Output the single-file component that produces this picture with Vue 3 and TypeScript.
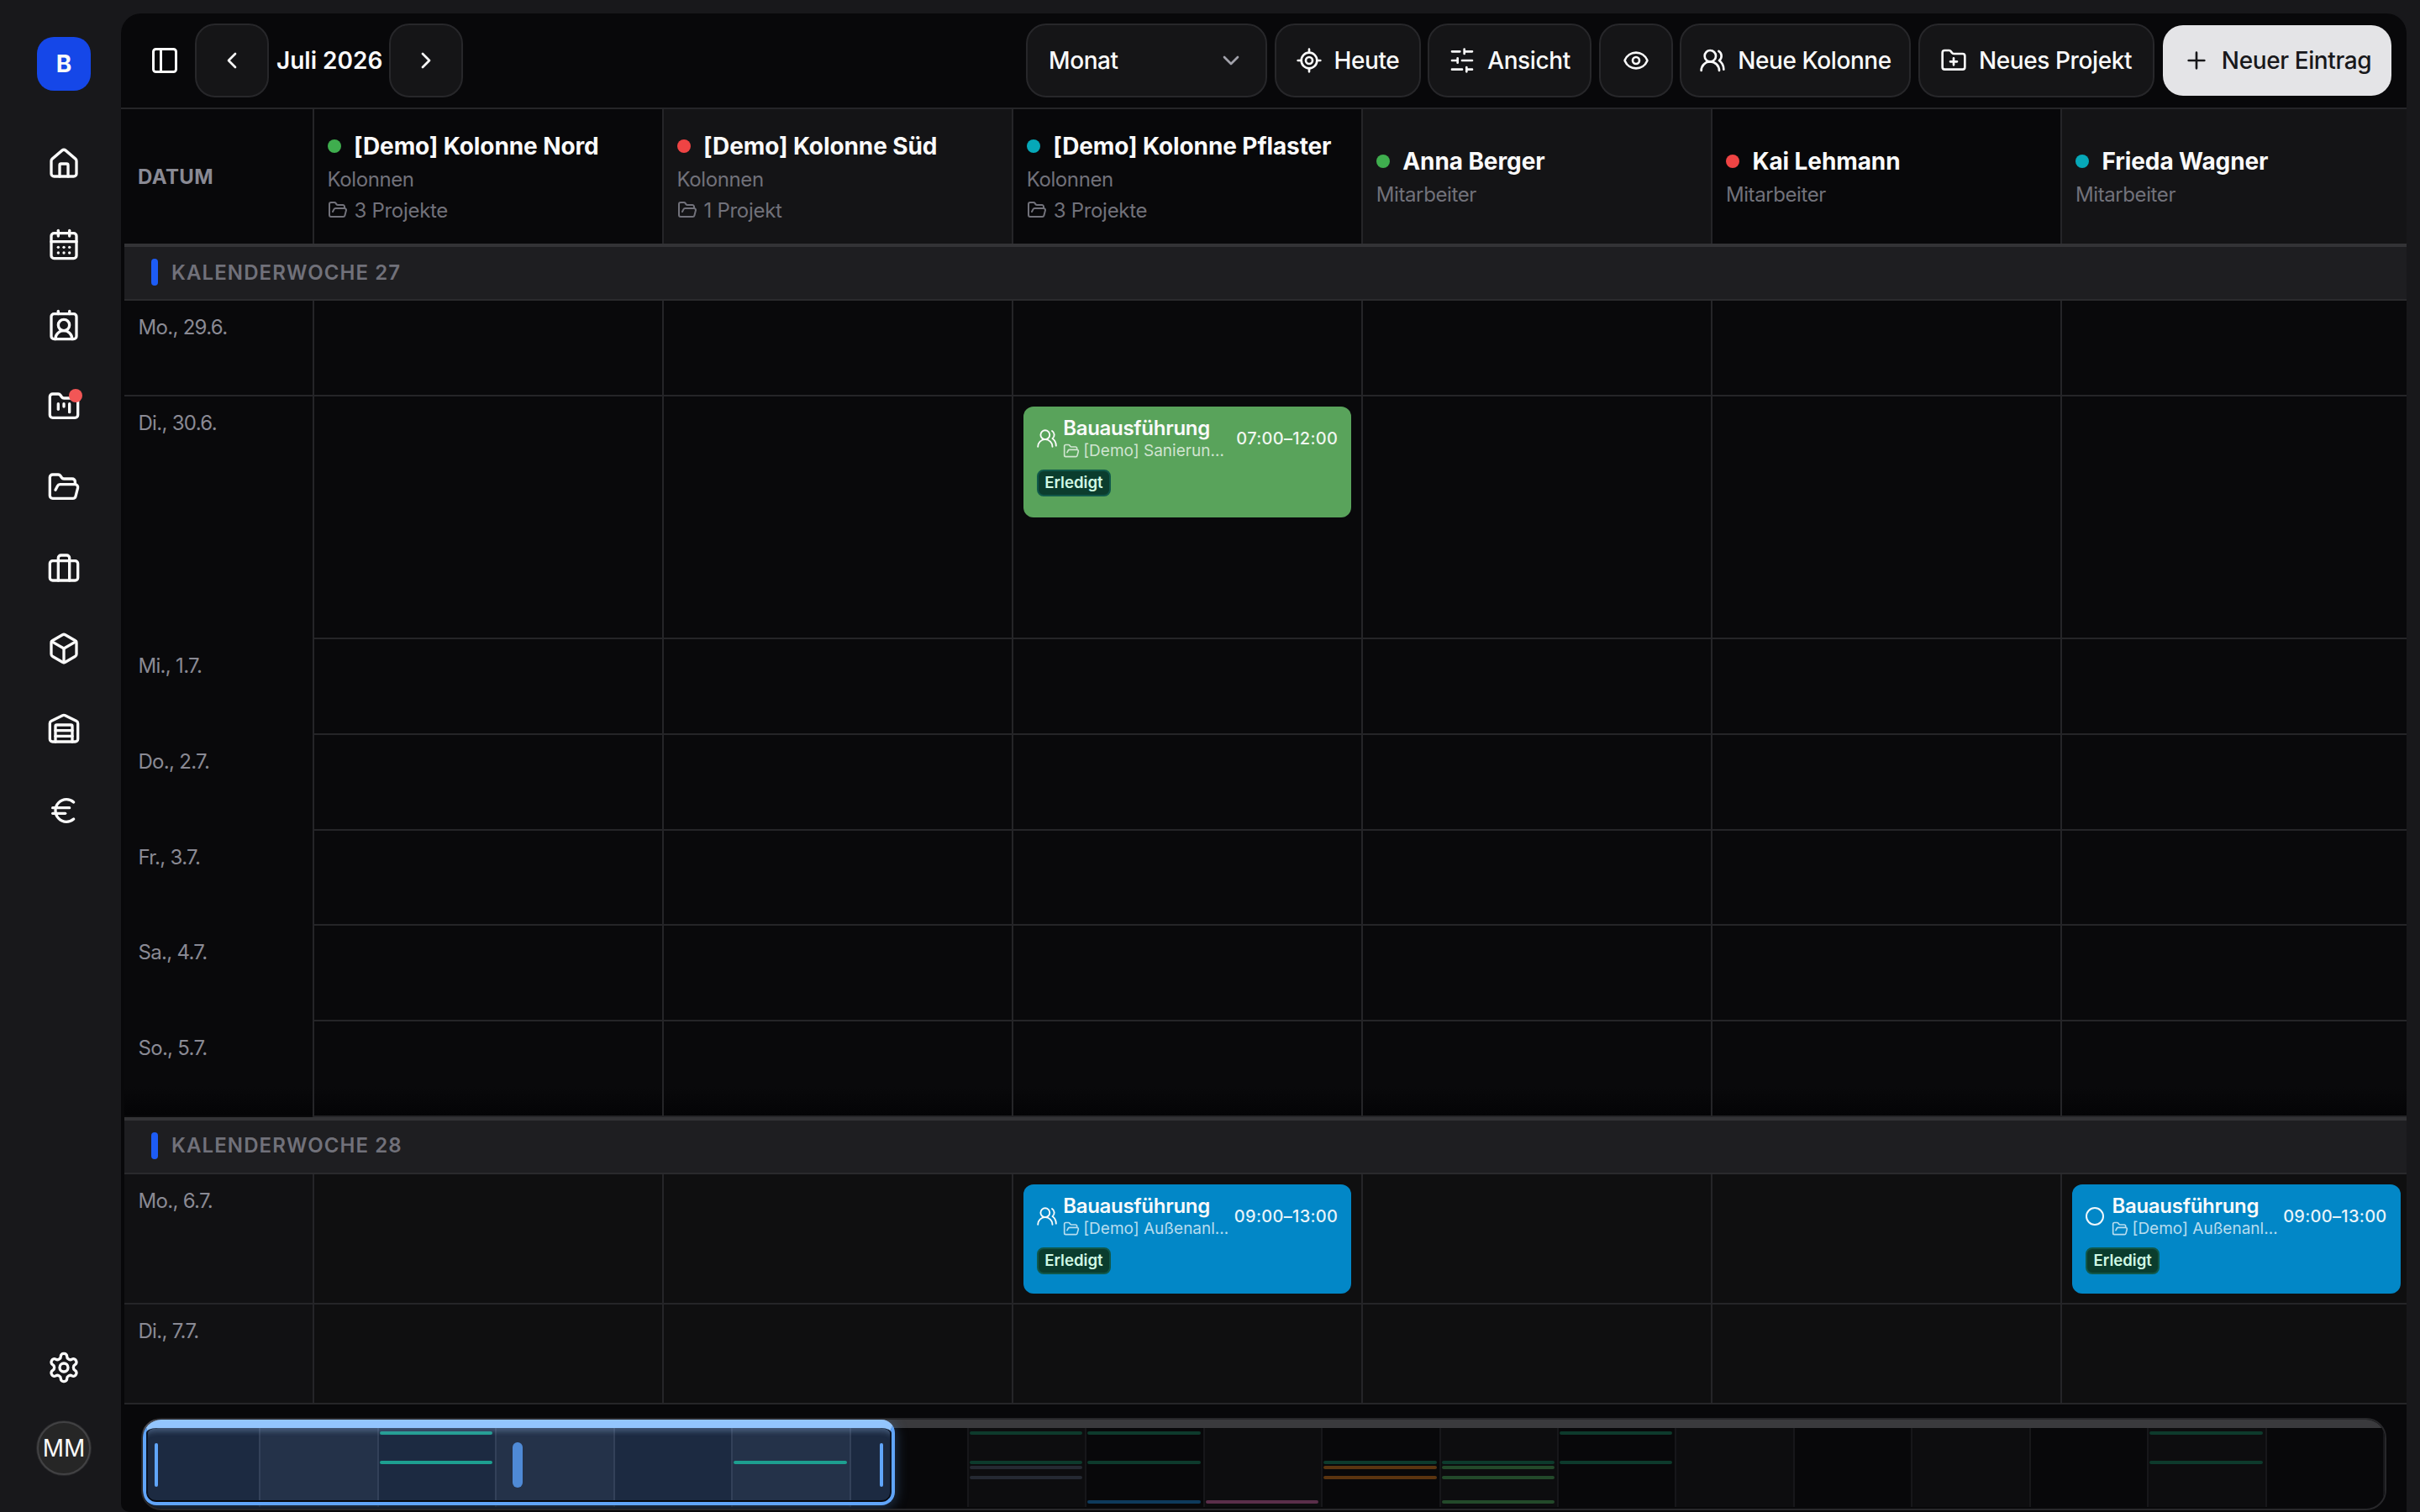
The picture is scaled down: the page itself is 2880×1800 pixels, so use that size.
<script setup lang="ts">
interface Col { name: string; dot: string; sub: string; projects?: string }
const columns: Col[] = [
  { name: '[Demo] Kolonne Nord', dot: '#3fae4e', sub: 'Kolonnen', projects: '3 Projekte' },
  { name: '[Demo] Kolonne Süd', dot: '#ef4444', sub: 'Kolonnen', projects: '1 Projekt' },
  { name: '[Demo] Kolonne Pflaster', dot: '#06a8b8', sub: 'Kolonnen', projects: '3 Projekte' },
  { name: 'Anna Berger', dot: '#3fae4e', sub: 'Mitarbeiter' },
  { name: 'Kai Lehmann', dot: '#ef4444', sub: 'Mitarbeiter' },
  { name: 'Frieda Wagner', dot: '#06a8b8', sub: 'Mitarbeiter' },
]
interface Entry { col: number; color: string; project: string; time: string; icon: 'users' | 'circle'; tall?: boolean }
interface Row { kw?: string; label?: string; h: number; entries?: Entry[]; open?: boolean; late?: boolean; dim?: boolean }
const rows: Row[] = [
  { kw: 'KALENDERWOCHE 27', h: 68 },
  { label: 'Mo., 29.6.', h: 114 },
  { label: 'Di., 30.6.', h: 289, open: true, entries: [{ col: 2, color: '#59a35b', project: '[Demo] Sanierun…', time: '07:00–12:00', icon: 'users', tall: true }] },
  { label: 'Mi., 1.7.', h: 113.8, open: true },
  { label: 'Do., 2.7.', h: 113.8, open: true },
  { label: 'Fr., 3.7.', h: 113.8, open: true },
  { label: 'Sa., 4.7.', h: 113.8, open: true },
  { label: 'So., 5.7.', h: 113.8, open: true, dim: true },
  { kw: 'KALENDERWOCHE 28', h: 68 },
  { label: 'Mo., 6.7.', h: 155, late: true, entries: [
    { col: 2, color: '#0287c7', project: '[Demo] Außenanl…', time: '09:00–13:00', icon: 'users' },
    { col: 5, color: '#0287c7', project: '[Demo] Außenanl…', time: '09:00–13:00', icon: 'circle' },
  ] },
  { label: 'Di., 7.7.', h: 119, late: true },
]
const entryAt = (r: Row, c: number) => r.entries?.find(e => e.col === c)

const navIcons = [
  ['M15 21v-8a1 1 0 0 0-1-1h-4a1 1 0 0 0-1 1v8', 'M3 10a2 2 0 0 1 .709-1.528l7-5.999a2 2 0 0 1 2.582 0l7 5.999A2 2 0 0 1 21 10v9a2 2 0 0 1-2 2H5a2 2 0 0 1-2-2z'],
  ['M8 2v4', 'M16 2v4', 'M5 4h14a2 2 0 0 1 2 2v14a2 2 0 0 1-2 2H5a2 2 0 0 1-2-2V6a2 2 0 0 1 2-2z', 'M3 10h18', 'M8 14h.01', 'M12 14h.01', 'M16 14h.01', 'M8 18h.01', 'M12 18h.01', 'M16 18h.01'],
  ['M16 2v2', 'M17.915 22a6 6 0 0 0-12 0', 'M8 2v2', 'M12 8a4 4 0 1 1 0 8a4 4 0 1 1 0-8z', 'M5 4h14a2 2 0 0 1 2 2v14a2 2 0 0 1-2 2H5a2 2 0 0 1-2-2V6a2 2 0 0 1 2-2z'],
  ['M4 20h16a2 2 0 0 0 2-2V8a2 2 0 0 0-2-2h-7.93a2 2 0 0 1-1.66-.9l-.82-1.2A2 2 0 0 0 7.93 3H4a2 2 0 0 0-2 2v13c0 1.1.9 2 2 2Z', 'M8 10v4', 'M12 10v2', 'M16 10v6'],
  ['m6 14 1.5-2.9A2 2 0 0 1 9.24 10H20a2 2 0 0 1 1.94 2.5l-1.54 6a2 2 0 0 1-1.95 1.5H4a2 2 0 0 1-2-2V5a2 2 0 0 1 2-2h3.9a2 2 0 0 1 1.69.9l.81 1.2a2 2 0 0 0 1.67.9H18a2 2 0 0 1 2 2v2'],
  ['M16 21V5a2 2 0 0 0-2-2h-4a2 2 0 0 0-2 2v16', 'M4 7h16a2 2 0 0 1 2 2v10a2 2 0 0 1-2 2H4a2 2 0 0 1-2-2V9a2 2 0 0 1 2-2z'],
  ['M21 8a2 2 0 0 0-1-1.73l-7-4a2 2 0 0 0-2 0l-7 4A2 2 0 0 0 3 8v8a2 2 0 0 0 1 1.73l7 4a2 2 0 0 0 2 0l7-4A2 2 0 0 0 21 16Z', 'm3.3 7 8.7 5 8.7-5', 'M12 22V12'],
  ['M18 21V10a1 1 0 0 0-1-1H7a1 1 0 0 0-1 1v11', 'M22 19a2 2 0 0 1-2 2H4a2 2 0 0 1-2-2V8a2 2 0 0 1 1.132-1.803l7.95-3.974a2 2 0 0 1 1.837 0l7.948 3.974A2 2 0 0 1 22 8z', 'M6 13h12', 'M6 17h12'],
  ['M4 10h12', 'M4 14h9', 'M19 6a7.7 7.7 0 0 0-5.2-2A7.9 7.9 0 0 0 6 12c0 4.4 3.5 8 7.8 8 2 0 3.8-.8 5.2-2'],
]
const folder = 'm6 14 1.5-2.9A2 2 0 0 1 9.24 10H20a2 2 0 0 1 1.94 2.5l-1.54 6a2 2 0 0 1-1.95 1.5H4a2 2 0 0 1-2-2V5a2 2 0 0 1 2-2h3.9a2 2 0 0 1 1.69.9l.81 1.2a2 2 0 0 0 1.67.9H18a2 2 0 0 1 2 2v2'
const gear = 'M12.22 2h-.44a2 2 0 0 0-2 2v.18a2 2 0 0 1-1 1.73l-.43.25a2 2 0 0 1-2 0l-.15-.08a2 2 0 0 0-2.73.73l-.22.38a2 2 0 0 0 .73 2.73l.15.1a2 2 0 0 1 1 1.72v.51a2 2 0 0 1-1 1.74l-.15.09a2 2 0 0 0-.73 2.73l.22.38a2 2 0 0 0 2.73.73l.15-.08a2 2 0 0 1 2 0l.43.25a2 2 0 0 1 1 1.73V20a2 2 0 0 0 2 2h.44a2 2 0 0 0 2-2v-.18a2 2 0 0 1 1-1.73l.43-.25a2 2 0 0 1 2 0l.15.08a2 2 0 0 0 2.73-.73l.22-.39a2 2 0 0 0-.73-2.73l-.15-.08a2 2 0 0 1-1-1.74v-.5a2 2 0 0 1 1-1.74l.15-.09a2 2 0 0 0 .73-2.73l-.22-.38a2 2 0 0 0-2.73-.73l-.15.08a2 2 0 0 1-2 0l-.43-.25a2 2 0 0 1-1-1.73V4a2 2 0 0 0-2-2z'

const G = '#0d3a2c', GR = '#252932', B = '#0e3a5c', P = '#5a2e4a', O = '#5a3410', L = '#23492a', T = '#09553e'
const tops = [4, 39, 45, 57, 86]
const mini: [number, number, string][] = [
  [2, 0, T], [2, 1, T], [5, 1, T], [5, 4, T],
  [7, 0, G], [7, 1, G], [7, 2, GR], [7, 3, GR],
  [8, 0, G], [8, 1, G], [8, 4, B],
  [9, 4, P],
  [10, 1, G], [10, 2, O], [10, 3, O],
  [11, 1, G], [11, 2, L], [11, 3, L], [11, 4, L],
  [12, 0, G], [12, 1, G],
  [17, 0, G], [17, 1, G],
]
const days = Array.from({ length: 19 }, (_, i) => i)
const barsIn = (d: number) => mini.filter(m => m[0] === d)
</script>

<template>
  <div class="app">
    <aside class="side">
      <div class="logo">B</div>
      <nav class="nav">
        <div v-for="(icon, i) in navIcons" :key="i" class="nav-item">
          <svg class="ic40" viewBox="0 0 24 24"><path v-for="d in icon" :key="d" :d="d" /></svg>
          <span v-if="i === 3" class="notif"></span>
        </div>
      </nav>
      <div class="side-bottom">
        <svg class="ic40" viewBox="0 0 24 24"><path :d="gear" /><circle cx="12" cy="12" r="3" /></svg>
        <div class="avatar">MM</div>
      </div>
    </aside>

    <main class="main">
      <header class="toolbar">
        <div class="tb-left">
          <svg class="ic36 toggle" viewBox="0 0 24 24"><rect x="3" y="3" width="18" height="18" rx="2" /><path d="M9 3v18" /></svg>
          <button class="btn square"><svg class="ic32" viewBox="0 0 24 24"><path d="m15 18-6-6 6-6" /></svg></button>
          <span class="month">Juli 2026</span>
          <button class="btn square"><svg class="ic32" viewBox="0 0 24 24"><path d="m9 18 6-6-6-6" /></svg></button>
        </div>
        <div class="tb-right">
          <button class="btn select"><span>Monat</span><svg class="ic32 muted" viewBox="0 0 24 24"><path d="m6 9 6 6 6-6" /></svg></button>
          <button class="btn heute">
            <svg class="ic32" viewBox="0 0 24 24"><path d="M2 12h3M19 12h3M12 2v3M12 19v3" /><circle cx="12" cy="12" r="7" /><circle cx="12" cy="12" r="3" /></svg>Heute
          </button>
          <button class="btn ansicht">
            <svg class="ic32" viewBox="0 0 24 24"><path d="M21 4h-7M10 4H3M21 12h-9M8 12H3M21 20h-5M12 20H3M14 2v4M8 10v4M16 18v4" /></svg>Ansicht
          </button>
          <button class="btn square"><svg class="ic32" viewBox="0 0 24 24"><path d="M2.062 12.348a1 1 0 0 1 0-.696 10.75 10.75 0 0 1 19.876 0 1 1 0 0 1 0 .696 10.75 10.75 0 0 1-19.876 0" /><circle cx="12" cy="12" r="3" /></svg></button>
          <button class="btn kolonne">
            <svg class="ic32" viewBox="0 0 24 24"><path d="M18 21a8 8 0 0 0-16 0" /><circle cx="10" cy="8" r="5" /><path d="M22 20c0-3.37-2-6.5-4-8a5 5 0 0 0-.45-8.3" /></svg>Neue Kolonne
          </button>
          <button class="btn projekt">
            <svg class="ic32" viewBox="0 0 24 24"><path d="M12 10v6M9 13h6M20 20a2 2 0 0 0 2-2V8a2 2 0 0 0-2-2h-7.9a2 2 0 0 1-1.69-.9L9.6 3.9A2 2 0 0 0 7.93 3H4a2 2 0 0 0-2 2v13a2 2 0 0 0 2 2Z" /></svg>Neues Projekt
          </button>
          <button class="btn primary">
            <svg class="ic32" viewBox="0 0 24 24"><path d="M5 12h14M12 5v14" /></svg>Neuer Eintrag
          </button>
        </div>
      </header>

      <div class="head">
        <div class="datum">DATUM</div>
        <div v-for="(c, i) in columns" :key="c.name" class="hcol" :class="{ alt: i % 2 === 1 }">
          <div class="hname"><span class="dot" :style="{ background: c.dot }"></span>{{ c.name }}</div>
          <div class="hsub">{{ c.sub }}</div>
          <div v-if="c.projects" class="hproj">
            <svg class="ic24" viewBox="0 0 24 24"><path :d="folder" /></svg>{{ c.projects }}
          </div>
        </div>
      </div>

      <div class="body">
        <template v-for="(r, ri) in rows" :key="ri">
          <div v-if="r.kw" class="kw" :style="{ height: r.h + 'px' }">
            <span class="kw-bar"></span>{{ r.kw }}
          </div>
          <div v-else class="row" :class="{ late: r.late, dim: r.dim }" :style="{ height: r.h + 'px' }">
            <div class="date" :class="{ open: r.open }">{{ r.label }}</div>
            <div v-for="(c, ci) in columns" :key="c.name" class="cell">
              <div v-if="entryAt(r, ci)" class="card" :class="{ tall: entryAt(r, ci)!.tall }" :style="{ background: entryAt(r, ci)!.color }">
                <div class="card-top">
                  <svg v-if="entryAt(r, ci)!.icon === 'users'" class="card-ic" viewBox="0 0 24 24"><path d="M18 21a8 8 0 0 0-16 0" /><circle cx="10" cy="8" r="5" /><path d="M22 20c0-3.37-2-6.5-4-8a5 5 0 0 0-.45-8.3" /></svg>
                  <span v-else class="card-circle"></span>
                  <div class="card-text">
                    <div class="card-title">Bauausführung</div>
                    <div class="card-sub"><svg class="ic20" viewBox="0 0 24 24"><path :d="folder" /></svg>{{ entryAt(r, ci)!.project }}</div>
                  </div>
                  <div class="card-time">{{ entryAt(r, ci)!.time }}</div>
                </div>
                <span class="badge">Erledigt</span>
              </div>
            </div>
          </div>
        </template>
      </div>

      <footer class="mini-wrap">
        <div class="mini">
          <div class="mini-strip"></div>
          <div class="mini-days">
            <div v-for="d in days" :key="d" class="mini-day" :class="{ alt: d % 2 === 1 }">
              <span v-for="(b, bi) in barsIn(d)" :key="bi" class="mini-bar" :style="{ top: tops[b[1]] + 'px', background: b[2] }"></span>
            </div>
          </div>
          <div class="viewport">
            <span class="vp-h left"></span>
            <span class="vp-grip"></span>
            <span class="vp-h right"></span>
          </div>
        </div>
      </footer>
    </main>
  </div>
</template>

<style>
html, body { margin: 0; background: #18181b; }
</style>

<style scoped>
.app {
  width: 2880px; height: 1800px; display: flex; overflow: hidden;
  background: #18181b; color: #fafafa;
  font-family: Inter, "Noto Sans", sans-serif;
}
svg { fill: none; stroke: currentColor; stroke-width: 2; stroke-linecap: round; stroke-linejoin: round; flex: none; display: block; }
.ic40 { width: 40px; height: 40px; }
.ic36 { width: 36px; height: 36px; }
.ic32 { width: 32px; height: 32px; }
.ic24 { width: 24px; height: 24px; }
.ic20 { width: 20px; height: 20px; }
.muted { color: #a1a1aa; }

.side { width: 144px; flex: none; display: flex; flex-direction: column; align-items: center; padding: 44px 0 0 8px; box-sizing: border-box; }
.logo { width: 64px; height: 64px; border-radius: 20px; background: #1547e8; display: flex; align-items: center; justify-content: center; font-size: 28px; font-weight: 700; }
.nav { margin-top: 39px; display: flex; flex-direction: column; }
.nav-item { position: relative; width: 64px; height: 96.2px; display: flex; align-items: center; justify-content: center; }
.notif { position: absolute; left: 38px; top: 27px; width: 16px; height: 16px; border-radius: 50%; background: #f25656; }
.side-bottom { margin-top: auto; display: flex; flex-direction: column; align-items: center; padding-bottom: 44px; gap: 44px; }
.avatar { width: 64px; height: 64px; border-radius: 50%; box-sizing: border-box; background: #262626; border: 2px solid #424244; display: flex; align-items: center; justify-content: center; font-size: 28px; box-shadow: 0 0 0 1px #2a2a2c; }

.main { width: 2720px; height: 1784px; margin-top: 16px; background: #08080a; border-radius: 24px 24px 0 10px; overflow: hidden; display: flex; flex-direction: column; flex: none; }
.toolbar { height: 114px; flex: none; box-sizing: border-box; border-bottom: 2px solid #252528; padding: 12px 18px 0 24px; display: flex; justify-content: space-between; align-items: flex-start; }
.tb-left { display: flex; align-items: center; height: 88px; }
.toggle { margin: 0 18px 0 10px; }
.month { font-size: 28px; font-weight: 600; margin: 0 8px 0 9px; }
.tb-right { display: flex; align-items: center; height: 88px; gap: 8.5px; }
.btn { height: 88px; box-sizing: border-box; border: 2px solid #27272a; border-radius: 24px; background: #151517; color: #fafafa; font: 500 28px Inter, sans-serif; letter-spacing: -.4px; display: flex; align-items: center; justify-content: center; gap: 14px; padding: 0; }
.square { width: 88px; }
.select { width: 287px; justify-content: space-between; padding: 0 25px 0 25px; }
.heute { width: 174px; }
.ansicht { width: 195px; }
.kolonne { width: 275px; }
.projekt { width: 281px; }
.primary { width: 272px; height: 84px; border: 0; margin-left: 2px; background: #e4e4e7; color: #18181b; }

.head { height: 160px; flex: none; display: flex; }
.datum { width: 228px; flex: none; box-sizing: border-box; padding-left: 20px; display: flex; align-items: center; font-size: 24px; font-weight: 700; color: #8a8a94; letter-spacing: .4px; }
.hcol { width: 416.1px; flex: none; box-sizing: border-box; border-left: 2px solid #252528; padding: 2px 0 0 15.5px; display: flex; flex-direction: column; justify-content: center; background: #08080a; }
.hcol.alt { background: #141416; }
.hname { font-size: 28px; font-weight: 700; letter-spacing: -.1px; display: flex; align-items: center; height: 40px; white-space: nowrap; }
.dot { width: 16px; height: 16px; border-radius: 50%; margin-right: 15.5px; flex: none; }
.hsub { font-size: 24px; letter-spacing: -.4px; color: #71717a; height: 36px; line-height: 36px; margin-top: 2px; }
.hproj { font-size: 24px; letter-spacing: -.3px; color: #71717a; height: 36px; display: flex; align-items: center; gap: 8px; }

.body { flex: 1; min-height: 0; overflow: hidden; background: #08080a; }
.kw { box-sizing: border-box; margin-left: 4px; display: flex; align-items: center; background: #1e1e21; border-top: 4px solid #333336; border-bottom: 2px solid #2a2a2d; padding: 0 0 2px 32px; gap: 16px; font-size: 24px; font-weight: 600; color: #71717a; letter-spacing: 1.1px; }
.kw-bar { width: 8px; height: 32px; border-radius: 4px; background: #1d5cf5; }
.row { display: flex; box-sizing: border-box; margin-left: 4px; border-bottom: 2px solid #252528; background: #09090b; }
.row.dim { background: linear-gradient(#09090b 70%, #040406); }
.row.late { background: #0f0f10; }
.date { width: 224px; flex: none; box-sizing: border-box; padding: 16px 0 0 16.5px; font-size: 24px; letter-spacing: -.7px; line-height: 32px; color: #8a8a94; }
.row.late .date { background: #111113; }
.date.open { position: relative; }
.date.open::after { content: ""; position: absolute; left: 0; right: 0; bottom: -2px; height: 2px; background: #09090b; }
.cell { width: 416.1px; flex: none; box-sizing: border-box; border-left: 2px solid #252528; padding: 12px 12px 0 12px; }

.card { height: 130px; border-radius: 12px; box-sizing: border-box; padding: 11px 16px 0 16px; }
.card.tall { height: 132px; }
.card-top { display: flex; align-items: center; }
.card-ic { width: 26px; height: 26px; margin-right: 6px; stroke-width: 1.75; margin-left: -1px; }
.card-circle { width: 22px; height: 22px; box-sizing: border-box; border: 2.5px solid #f0f7fb; border-radius: 50%; margin-right: 9px; flex: none; }
.card-text { flex: 1; min-width: 0; }
.card-title { font-size: 24px; font-weight: 600; letter-spacing: -.3px; line-height: 30px; white-space: nowrap; }
.card-sub { display: flex; align-items: center; gap: 4px; font-size: 19px; line-height: 24px; color: rgba(255,255,255,.72); white-space: nowrap; }
.card-time { font-size: 20px; font-weight: 500; letter-spacing: .3px; color: rgba(255,255,255,.92); white-space: nowrap; }
.badge { display: inline-block; margin-top: 10px; height: 32px; box-sizing: border-box; padding: 0 7px; border: 2px solid #10584a; border-radius: 8px; background: #0b3d2e; color: #d1fae5; font-size: 18.6px; font-weight: 600; line-height: 27px; }

.mini-wrap { height: 128px; flex: none; padding: 16px 24px 0; box-sizing: border-box; }
.mini { position: relative; height: 110px; box-sizing: border-box; border: 2px solid #27272a; border-radius: 24px; background: #08080a; overflow: hidden; }
.mini-strip { height: 10px; background: #3a3a3d; }
.mini-days { display: flex; height: 94px; }
.mini-day { position: relative; flex: 1; border-right: 2px solid #17171a; }
.mini-day.alt { background: #0d0d0f; }
.mini-bar { position: absolute; left: 1px; right: 3px; height: 4px; border-radius: 2px; }
.viewport {
  position: absolute; left: 0; top: 0; width: 895px; height: 102px; box-sizing: border-box;
  border: 4px solid #60a5fa; border-top: 10px solid #93c5fd; border-radius: 16px;
  background: rgba(80,150,250,.2);
  backdrop-filter: brightness(1.9);
  box-shadow: 0 2px 16px rgba(96,165,250,.35),
    inset 0 -2px 0 #06090f, inset 2px 0 0 #0b1424, inset -2px 0 0 #0b1424,
    inset 0 8px 6px -4px rgba(120,150,190,.45);
}
.vp-h { position: absolute; top: 18px; width: 4px; height: 52px; border-radius: 2px; background: #60a5fa; }
.vp-h.left { left: 10px; }
.vp-h.right { right: 10px; }
.vp-grip { position: absolute; left: 436px; top: 17px; width: 12px; height: 54px; border-radius: 6px; background: #4f8ad6; }
</style>
